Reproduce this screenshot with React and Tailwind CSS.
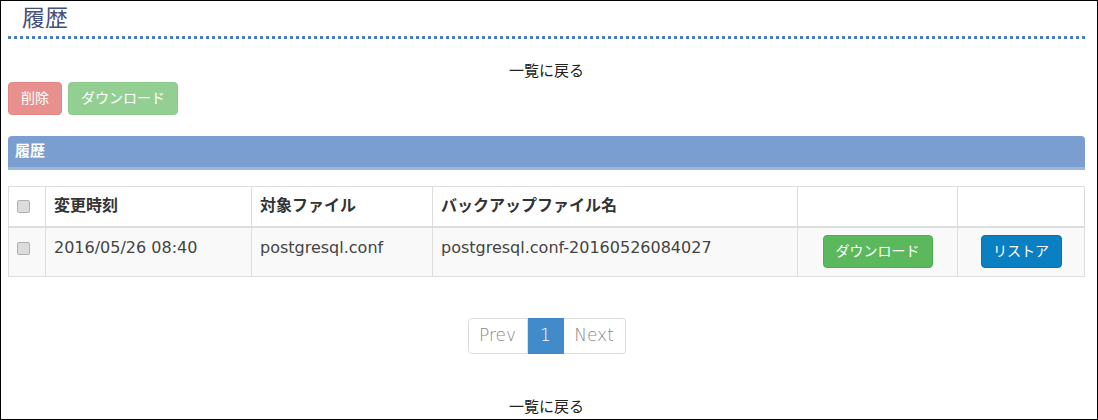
import React from "react";

const font = { fontFamily: '"DejaVu Sans", "Noto Sans CJK JP", sans-serif' };

function Check() {
  return (
    <span className="inline-block w-[13px] h-[13px] rounded-[2px] border border-[#b0b0b0] bg-[#dcdcdc] align-middle" />
  );
}

export default function App() {
  return (
    <div
      className="w-[1098px] h-[420px] overflow-hidden border border-black bg-white text-[#333] box-border"
      style={font}
    >
      <div className="pl-[7px] pr-[12px]">
        <div className="border-b-[3px] border-dotted border-[#4a7cc0] pl-[14px] pt-[3px] h-[38px]">
          <h1 className="text-[23px] leading-[28px] text-[#46507c] font-normal">履歴</h1>
        </div>
        <div className="text-center text-[15px] leading-[20px] text-[#222] mt-[22px]">一覧に戻る</div>
        <div className="flex gap-[6px] mt-[1px]">
          <button className="h-[33px] px-[12px] rounded-[4px] bg-[#e8908e] border border-[#e38785] text-white text-[14px]">削除</button>
          <button className="h-[33px] px-[12px] rounded-[4px] bg-[#93cf93] border border-[#8bcb8b] text-white text-[14px]">ダウンロード</button>
        </div>
        <div className="mt-[21px] h-[34px] rounded-t-[4px] bg-[#7a9ed0] border-b-[3px] border-[#9cb6dd] flex items-center pl-[7px]">
          <span className="text-white text-[15px] font-bold">履歴</span>
        </div>
        <table className="mt-[16px] w-full border-collapse border border-[#ddd] text-[16px]">
          <colgroup>
            <col className="w-[37px]" />
            <col className="w-[206px]" />
            <col className="w-[181px]" />
            <col className="w-[365px]" />
            <col className="w-[160px]" />
            <col className="w-[127px]" />
          </colgroup>
          <thead>
            <tr className="h-[40px]">
              <th className="border border-[#ddd] border-b-2 px-[8px] text-left align-middle"><Check /></th>
              <th className="border border-[#ddd] border-b-2 px-[8px] text-left font-bold">変更時刻</th>
              <th className="border border-[#ddd] border-b-2 px-[8px] text-left font-bold">対象ファイル</th>
              <th className="border border-[#ddd] border-b-2 px-[8px] text-left font-bold">バックアップファイル名</th>
              <th className="border border-[#ddd] border-b-2 px-[8px]"></th>
              <th className="border border-[#ddd] border-b-2 px-[8px]"></th>
            </tr>
          </thead>
          <tbody>
            <tr className="bg-[#f9f9f9] h-[50px]">
              <td className="border border-[#ddd] px-[8px] pt-[8px] align-top"><Check /></td>
              <td className="border border-[#ddd] px-[8px] pt-[8px] align-top text-[#444]">2016/05/26 08:40</td>
              <td className="border border-[#ddd] px-[8px] pt-[8px] align-top text-[#444]">postgresql.conf</td>
              <td className="border border-[#ddd] px-[8px] pt-[8px] align-top text-[#444]">postgresql.conf-20160526084027</td>
              <td className="border border-[#ddd] px-[8px] py-[7px] text-center">
                <button className="h-[33px] w-[110px] rounded-[4px] bg-[#5cb85c] border border-[#4cae4c] text-white text-[14px]">ダウンロード</button>
              </td>
              <td className="border border-[#ddd] px-[8px] py-[7px] text-center">
                <button className="h-[33px] w-[81px] rounded-[4px] bg-[#0a80c2] border border-[#0671ad] text-white text-[14px]">リストア</button>
              </td>
            </tr>
          </tbody>
        </table>
        <div className="flex justify-center mt-[41px]">
          <div className="flex h-[36px] text-[17px] font-light">
            <span className="w-[60px] flex items-center justify-center border border-[#ddd] rounded-l-[4px] text-[#888]">Prev</span>
            <span className="w-[36px] flex items-center justify-center bg-[#428bca] border border-[#428bca] text-white">1</span>
            <span className="w-[62px] flex items-center justify-center border border-[#ddd] border-l-0 rounded-r-[4px] text-[#888]">Next</span>
          </div>
        </div>
        <div className="text-center text-[15px] leading-[20px] text-[#222] mt-[43px]">一覧に戻る</div>
      </div>
    </div>
  );
}
